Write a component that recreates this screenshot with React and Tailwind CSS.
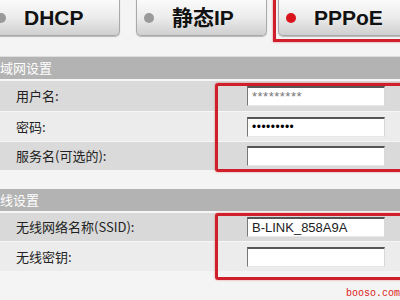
import React from 'react';

const cjk = { fontFamily: '"Noto Sans CJK SC", "Liberation Sans", sans-serif' };
const latin = { fontFamily: '"Liberation Sans", "Noto Sans CJK SC", sans-serif' };

function Tab({ label, active, className }) {
  return (
    <div
      className={`flex h-[36px] items-center rounded-b-[5px] border border-t-0 border-[#a9a9a9] bg-gradient-to-b from-[#fafafa] via-[#ececec] to-[#cfcfcf] shadow-[0_1px_1px_rgba(0,0,0,0.25)] ${className}`}
    >
      <span
        className={`ml-[7px] h-[10px] w-[10px] shrink-0 rounded-full ${active ? 'bg-[#d9141c]' : 'bg-[#9a9a9a]'}`}
      />
      <span className="ml-[18px] text-[21px] font-bold text-[#111]" style={latin}>
        {label}
      </span>
    </div>
  );
}

function Field({ children }) {
  return (
    <div className="flex h-[20px] w-[138px] items-center border-t-2 border-l border-r border-b border-t-[#555] border-l-[#777] border-r-[#d8d8d8] border-b-[#e8e8e8] bg-white pl-[4px]">
      {children}
    </div>
  );
}

function Row({ label, bg, h, children }) {
  return (
    <div className={`flex items-center ${bg} ${h}`}>
      <div className="w-[247px] pl-[16px] text-[13px] text-[#222]" style={cjk}>
        {label}
      </div>
      {children}
    </div>
  );
}

function Header({ text }) {
  return (
    <div className="h-[22px] bg-[#b3b3b3] text-[13px] leading-[22px] text-white" style={cjk}>
      {text}
    </div>
  );
}

export default function App() {
  return (
    <div className="relative h-[300px] w-[400px] overflow-hidden bg-[#f4f4f4]">
      {/* tabs */}
      <div className="flex h-[42px] items-start">
        <Tab label="DHCP" className="-ml-[12px] w-[132px] shrink-0" />
        <Tab label="静态IP" className="ml-[16px] w-[131px] shrink-0" />
        <div className="ml-[6px] h-[42px] w-[140px] shrink-0 border-b-[3px] border-l-[3px] border-[#cf1f2b] pb-[1px] pl-[2px] shadow-[0_0_2px_rgba(220,40,50,0.6)]">
          <Tab label="PPPoE" active className="w-[140px]" />
        </div>
      </div>

      <div className="h-[15px] border-b border-[#dedede]" />

      {/* 局域网设置 */}
      <Header text="域网设置" />
      <div className="flex flex-col gap-[1px] bg-[#f6f6f6] pt-[2px]">
        <Row label="用户名:" bg="bg-[#dadada]" h="h-[30px]">
          <Field>
            <span className="text-[13px] tracking-[0.5px] text-[#777]" style={latin}>
              *********
            </span>
          </Field>
        </Row>
        <Row label="密码:" bg="bg-[#ececec]" h="h-[29px]">
          <Field>
            <span className="text-[12px] leading-none tracking-[0.5px] text-black" style={latin}>
              •••••••••
            </span>
          </Field>
        </Row>
        <Row label="服务名(可选的):" bg="bg-[#dadada]" h="h-[28px]">
          <Field />
        </Row>
      </div>

      <div className="h-[19px]" />

      {/* 无线设置 */}
      <Header text="线设置" />
      <div className="flex flex-col gap-[1px] bg-[#f6f6f6] pt-[2px]">
        <Row label="无线网络名称(SSID):" bg="bg-[#d9d9d9]" h="h-[28px]">
          <Field>
            <span className="text-[13px] text-[#222]" style={latin}>
              B-LINK_858A9A
            </span>
          </Field>
        </Row>
        <Row label="无线密钥:" bg="bg-[#ececec]" h="h-[29px]">
          <Field />
        </Row>
      </div>

      {/* red annotation boxes */}
      <div className="absolute left-[215px] top-[83px] h-[89px] w-[200px] rounded-[3px] border-[3px] border-[#cf1f2b] shadow-[0_0_2px_rgba(220,40,50,0.6)]" />
      <div className="absolute left-[215px] top-[213px] h-[67px] w-[200px] rounded-[3px] border-[3px] border-[#cf1f2b] shadow-[0_0_2px_rgba(220,40,50,0.6)]" />

      <div
        className="absolute left-[346px] top-[286px] whitespace-nowrap text-[10px] text-[#d22]"
        style={{ fontFamily: '"Liberation Mono", monospace' }}
      >
        booso.com
      </div>
    </div>
  );
}
